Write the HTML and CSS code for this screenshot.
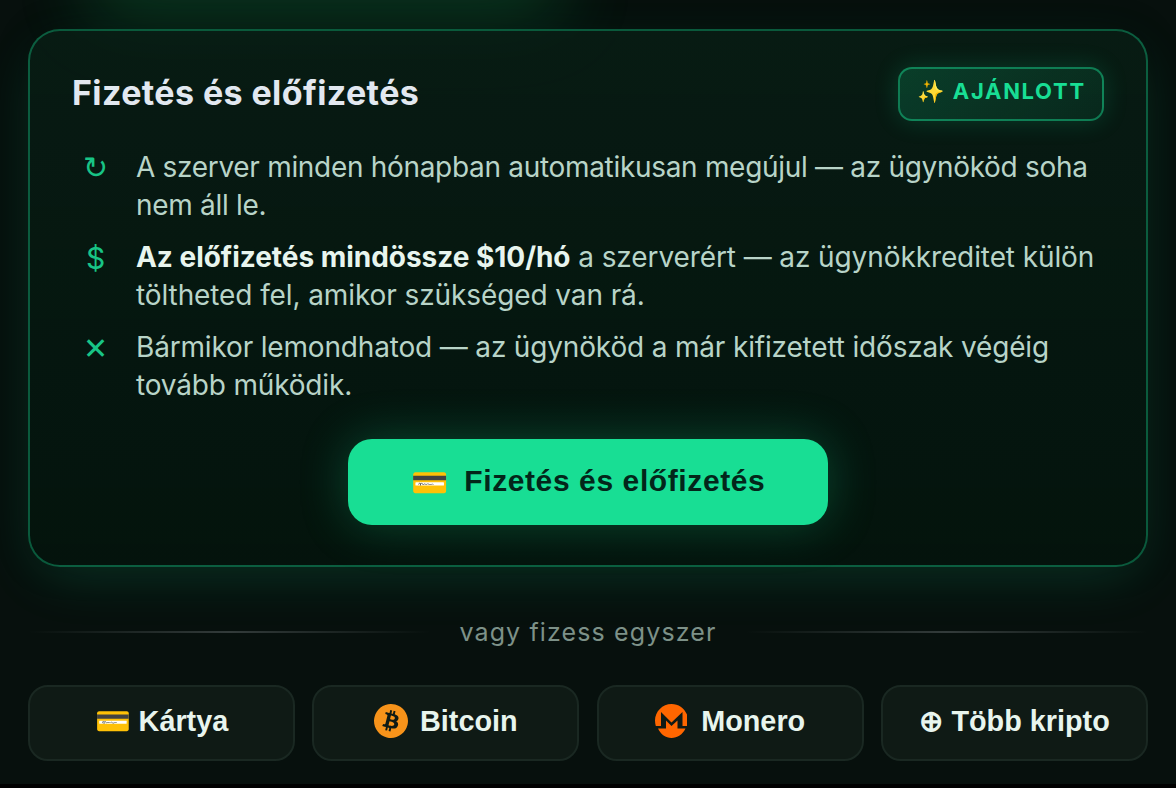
FILE: index.html
```html
<!DOCTYPE html>
<html lang="hu">
<head>
    <meta charset="UTF-8">
    <meta name="viewport" content="width=device-width, initial-scale=1.0">
    <title>Fizetés és előfizetés</title>
    <link rel="stylesheet" href="styles.css">
</head>
<body>
    <main class="page">
        <div class="top-glow"></div>
        <section class="card">
            <div class="card-head">
                <h2>Fizetés és előfizetés</h2>
                <span class="badge">✨ AJÁNLOTT</span>
            </div>
            <ul class="features">
                <li class="renewal"><span class="ico">↻</span><span>A szerver minden hónapban automatikusan megújul — az ügynököd soha nem áll le.</span></li>
                <li class="price"><span class="ico">$</span><span><strong>Az előfizetés mindössze $10/hó</strong> a szerverért — az ügynökkreditet külön töltheted fel, amikor szükséged van rá.</span></li>
                <li class="cancel"><span class="ico">✕</span><span>Bármikor lemondhatod — az ügynököd a már kifizetett időszak végéig tovább működik.</span></li>
            </ul>
            <button type="button" class="subscribe"><span class="card-icon">💳</span>Fizetés és előfizetés</button>
        </section>
        <div class="divider"><span>vagy fizess egyszer</span></div>
        <div class="methods">
            <button type="button" class="method">💳 Kártya</button>
            <button type="button" class="method">
                <svg class="coin" viewBox="0 0 24 24"><path fill="#f7931a" d="M23.638 14.904c-1.602 6.43-8.113 10.34-14.542 8.736C2.67 22.05-1.244 15.525.362 9.105 1.962 2.67 8.475-1.243 14.9.358c6.43 1.605 10.342 8.115 8.738 14.548v-.002zm-6.35-4.613c.24-1.59-.974-2.45-2.64-3.03l.54-2.153-1.315-.33-.525 2.107c-.345-.087-.705-.167-1.064-.25l.526-2.127-1.32-.33-.54 2.165c-.285-.067-.565-.132-.84-.2l-1.815-.45-.35 1.407s.975.225.955.236c.535.136.63.486.615.766l-1.477 5.92c-.075.166-.24.406-.614.314.015.02-.96-.24-.96-.24l-.66 1.51 1.71.426.93.242-.54 2.19 1.32.327.54-2.17c.36.1.705.19 1.05.273l-.51 2.154 1.32.33.545-2.19c2.24.427 3.93.257 4.64-1.774.57-1.637-.03-2.58-1.217-3.196.854-.193 1.5-.76 1.68-1.93h.01zm-3.01 4.22c-.404 1.64-3.157.75-4.05.53l.72-2.9c.896.23 3.757.67 3.33 2.37zm.41-4.24c-.37 1.49-2.662.735-3.405.55l.654-2.64c.744.18 3.137.524 2.75 2.084v.006z"/></svg>
                Bitcoin
            </button>
            <button type="button" class="method">
                <svg class="coin" viewBox="0 0 34 34"><path fill="#ff6600" d="M16.500 0C7.500 0 0 7.500 0 16.500c0 2 .3 3.700.8 5.500H6V8l10.500 10.500L27.500 8v14H32V10.500C29 4 23.500 0 16.500 0zM11 16.500v8H3C6 30.500 10.500 34 16.500 34s11-3.500 14-9.500h-8v-8l-6 5.500z"/></svg>
                Monero
            </button>
            <button type="button" class="method">⊕ Több kripto</button>
        </div>
    </main>
</body>
</html>
```

FILE: styles.css
```css
* {
    box-sizing: border-box;
}
body {
    margin: 0;
    background: #000;
    font-family: Inter, "Noto Sans", sans-serif;
}
.page {
    position: relative;
    height: 784px;
    padding: 29px 28px 0;
    background: #07100d;
    overflow: hidden;
}
/* glow of the element above the card */
.top-glow {
    position: absolute;
    left: 90px;
    top: -60px;
    width: 470px;
    height: 58px;
    border-radius: 28px;
    box-shadow: 0 14px 72px 6px rgba(24, 222, 120, 0.22);
}
.card {
    position: relative;
    height: 538px;
    padding: 36px 42px 40px;
    border: 2px solid rgba(24, 222, 148, 0.35);
    border-radius: 32px;
    background: linear-gradient(180deg, rgba(8, 30, 21, 0.8), rgba(4, 20, 13, 0.95));
    box-shadow: 0 16px 56px -12px rgba(24, 222, 148, 0.2), 0 0 32px rgba(0, 0, 0, 0.25);
}
.card-head {
    display: flex;
    justify-content: space-between;
    height: 54px;
}
h2 {
    margin: 0;
    font-size: 34px;
    font-weight: 700;
    line-height: 52px;
    letter-spacing: 0.4px;
    color: #e2e8f0;
}
.badge {
    width: 206px;
    height: 54px;
    border: 2px solid rgba(24, 222, 148, 0.45);
    border-radius: 14px;
    background: linear-gradient(135deg, rgba(24, 222, 148, 0.18), rgba(24, 222, 148, 0.08));
    box-shadow: 0 0 24px rgba(24, 222, 148, 0.18);
    color: #18de94;
    font-size: 22px;
    font-weight: 700;
    line-height: 44px;
    letter-spacing: 1.7px;
    text-indent: 1px;
    text-align: center;
    white-space: nowrap;
}
.features {
    display: flex;
    flex-direction: column;
    gap: 14px;
    margin: 27px 0 35px;
    padding: 0;
    list-style: none;
    font-size: 28px;
    line-height: 38px;
    color: #b8d4c8;
}
.features li {
    display: flex;
    gap: 17px;
}
.features strong {
    color: #e8f5ee;
    letter-spacing: -0.03px;
}
.renewal {
    letter-spacing: -0.31px;
}
.price {
    letter-spacing: -0.1px;
}
.cancel {
    letter-spacing: -0.17px;
}
.ico {
    flex: 0 0 47px;
    text-align: center;
    font-size: 30px;
    line-height: 40px;
    color: #18c486;
}
.renewal .ico {
    font-family: "DejaVu Sans", sans-serif;
}
button {
    font-family: "Liberation Sans", Arial, sans-serif;
    font-weight: 700;
}
.subscribe {
    display: flex;
    align-items: center;
    justify-content: center;
    gap: 16px;
    width: 480px;
    height: 86px;
    margin: 0 auto;
    padding: 0 0 2px;
    border: none;
    border-radius: 24px;
    background: #18de94;
    box-shadow: 0 0 48px rgba(24, 222, 148, 0.26);
    color: #03261a;
    font-size: 30px;
    letter-spacing: 0.6px;
}
.card-icon {
    padding-top: 2px;
    font-size: 30px;
}
.divider {
    display: flex;
    align-items: center;
    gap: 28px;
    height: 40px;
    margin: 45px 0 33px;
    color: #7d9188;
    font-size: 25px;
    letter-spacing: 1.13px;
}
.divider::before,
.divider::after {
    content: "";
    flex: 1;
    height: 2px;
    background: linear-gradient(90deg, transparent, rgba(226, 232, 240, 0.2), transparent);
}
.methods {
    display: grid;
    grid-template-columns: repeat(4, 1fr);
    gap: 17.6px;
}
.method {
    display: flex;
    align-items: center;
    justify-content: center;
    height: 76px;
    padding: 0 0 4px;
    border: 2px solid #1a2822;
    border-radius: 20px;
    background: #0f1a15;
    color: #e8f5ee;
    font-size: 28.8px;
}
.coin {
    width: 34px;
    height: 34px;
    margin-right: 12px;
}
```
